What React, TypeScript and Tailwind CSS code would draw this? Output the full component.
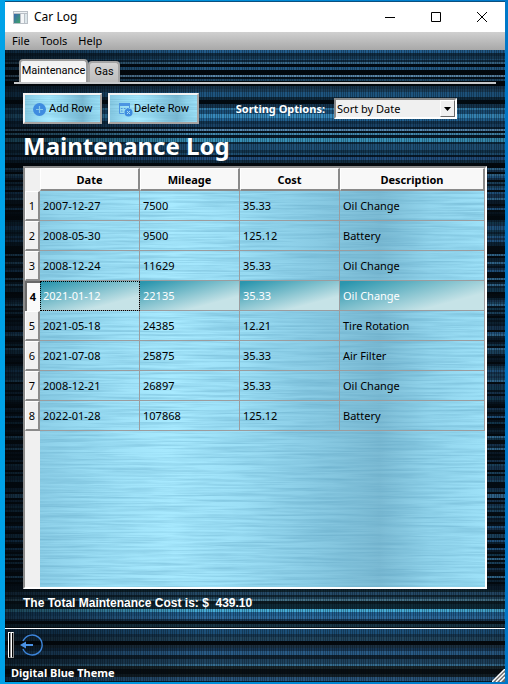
import { useId, useState } from "react";

type Entry = { date: string; mileage: string; cost: string; description: string };

const entries: Entry[] = [
  { date: "2007-12-27", mileage: "7500", cost: "35.33", description: "Oil Change" },
  { date: "2008-05-30", mileage: "9500", cost: "125.12", description: "Battery" },
  { date: "2008-12-24", mileage: "11629", cost: "35.33", description: "Oil Change" },
  { date: "2021-01-12", mileage: "22135", cost: "35.33", description: "Oil Change" },
  { date: "2021-05-18", mileage: "24385", cost: "12.21", description: "Tire Rotation" },
  { date: "2021-07-08", mileage: "25875", cost: "35.33", description: "Air Filter" },
  { date: "2008-12-21", mileage: "26897", cost: "35.33", description: "Oil Change" },
  { date: "2022-01-28", mileage: "107868", cost: "125.12", description: "Battery" },
];

// Horizontal light bands of the dark theme: top, height, colour
const bands: [number, number, string][] = [
  [0, 3, "#225c8b"], [3, 3, "#102c42"], [6, 3, "#163a55"], [9, 1, "#215074"], [10, 2, "#0f2a3f"],
  [12, 2, "#396889"], [14, 3, "#020a12"], [17, 3, "#265c86"], [20, 5, "#02070c"], [25, 2, "#5a86a8"],
  [27, 2, "#04101a"], [29, 2, "#214a68"], [31, 5, "#02070b"], [36, 3, "#16344c"], [39, 3, "#1a3e5a"],
  [42, 5, "#1e547e"], [47, 3, "#0f293c"], [50, 4, "#020a10"], [54, 4, "#14344d"], [58, 2, "#3078a4"],
  [60, 4, "#1b4f78"], [64, 4, "#3789bb"], [68, 3, "#20608f"], [71, 3, "#12344f"], [74, 3, "#1a4366"],
  [77, 2, "#0a1e2e"], [79, 2, "#5587ae"], [81, 2, "#04101a"], [83, 2, "#4489ae"], [85, 3, "#081826"],
  [88, 4, "#378fb5"], [92, 2, "#0d2a3e"], [94, 6, "#1f4f74"], [100, 3, "#12344c"], [103, 2, "#1f4f72"],
  [105, 2, "#081826"], [107, 3, "#224e7e"], [110, 3, "#102c40"], [113, 5, "#03090d"],
  [539, 3, "#0f252f"], [542, 3, "#254a67"], [545, 2, "#112632"], [547, 2, "#204359"], [549, 2, "#437086"],
  [551, 3, "#0c1b22"], [554, 5, "#0f2b38"], [559, 3, "#46abd4"], [562, 4, "#215f90"], [566, 3, "#2e6a9c"],
  [569, 2, "#183a58"], [571, 3, "#060d11"], [574, 3, "#1a3848"], [577, 2, "#0a161d"],
  [579, 5, "#1c4f78"], [584, 3, "#163650"], [587, 4, "#22465e"], [591, 4, "#05090c"], [595, 3, "#1c3040"],
  [598, 3, "#183856"], [601, 4, "#295a84"], [605, 4, "#0f212f"], [609, 5, "#1f425d"], [614, 2, "#356d90"],
  [616, 3, "#182428"], [619, 5, "#090e11"], [624, 3, "#131f26"], [627, 4, "#2a5479"], [631, 5, "#0c1a26"],
];

const sideColours = ["#081520", "#17344f", "#03090e", "#215480", "#0d2334", "#13384f", "#040d14", "#32698f", "#0b1b2a", "#1c4460", "#060c10"];

for (let y = 118, i = 3; y < 539; y += 2) {
  i = (i * 73 + 41) % 997;
  bands.push([y, 2, sideColours[i % sideColours.length]]);
}

function DigitalBackdrop() {
  const id = useId();
  return (
    <svg className="absolute inset-0 -z-10 h-full w-full bg-[#081420]" aria-hidden="true">
      <defs>
        <linearGradient id={id + "s"}>
          <stop offset="0" stopColor="#02060a" stopOpacity="0.65" />
          <stop offset="0.12" stopColor="#02060a" stopOpacity="0.45" />
          <stop offset="0.4" stopColor="#02060a" stopOpacity="0" />
          <stop offset="0.85" stopColor="#02060a" stopOpacity="0" />
          <stop offset="1" stopColor="#02060a" stopOpacity="0.1" />
        </linearGradient>
        <pattern id={id + "v"} width="9" height="4" patternUnits="userSpaceOnUse">
          <path d="M0 0h1v4H0zM3 0h1v4H3zM5 0h1v4H5zM7 0h1v4H7z" fill="#010a14" fillOpacity="0.32" />
        </pattern>
      </defs>
      {bands.map(([y, h, c]) => (
        <rect key={y} y={y} width="100%" height={h} fill={c} />
      ))}
      <rect width="100%" height="100%" fill={`url(#${id}v)`} />
      <rect width="100%" height="100%" fill={`url(#${id}s)`} />
    </svg>
  );
}

function BrushedMetal() {
  const id = useId();
  return (
    <svg className="absolute inset-0 -z-10 h-full w-full" aria-hidden="true">
      <defs>
        <linearGradient id={id + "g"}>
          <stop offset="0" stopColor="#8accE5" />
          <stop offset="0.15" stopColor="#9bdef5" />
          <stop offset="0.32" stopColor="#a8eaff" />
          <stop offset="0.47" stopColor="#9cdff6" />
          <stop offset="0.62" stopColor="#8accE5" />
          <stop offset="0.77" stopColor="#7cbbd4" />
          <stop offset="0.88" stopColor="#92d5ed" />
          <stop offset="1" stopColor="#9de1f8" />
        </linearGradient>
        <filter id={id + "n"} x="0" y="0" width="100%" height="100%" colorInterpolationFilters="sRGB">
          <feTurbulence type="fractalNoise" baseFrequency="0.012 0.45" numOctaves="4" seed="8" />
          <feColorMatrix values="0 0 0 0 0.35  0 0 0 0 0.62  0 0 0 0 0.74  0.8 0 0 0 -0.28" />
        </filter>
      </defs>
      <rect width="100%" height="100%" fill={`url(#${id}g)`} />
      <rect width="100%" height="100%" filter={`url(#${id}n)`} />
    </svg>
  );
}

const metalButton =
  "relative isolate flex h-[31px] items-center border-2 border-t-[#f4f4f4] border-l-[#f4f4f4] border-r-[#a8a4a2] border-b-[#a8a4a2] pt-[2px] font-['Roboto','Noto_Sans',sans-serif] text-[11px] text-black";

const bevel = "border-t border-l border-r-2 border-b-2 border-t-white border-l-white border-r-[#8a8a8a] border-b-[#8a8a8a]";

export default function App() {
  const [selected, setSelected] = useState(3);
  return (
    <div className="flex min-h-screen flex-col bg-linear-to-r from-[#00a2e8] to-[#0078c8] pt-px pr-[3px] pb-[2px] pl-[5px] font-['Noto_Sans','Open_Sans',sans-serif] text-black">
      <header className="flex h-[31px] items-center border-t border-[#0a5080] bg-white pl-2">
        <svg width="15" height="13" viewBox="0 0 15 13" aria-hidden="true">
          <defs>
            <linearGradient id="appIcon" x2="1" y2="1">
              <stop offset="0" stopColor="#3b68b0" />
              <stop offset="1" stopColor="#3fa36a" />
            </linearGradient>
          </defs>
          <path d="M0 0h15v13H0z" fill="#b9bfc6" />
          <path d="M1 1h13v1H1z" fill="#eef1f4" />
          <path d="M1 3h6v9H1z" fill="url(#appIcon)" />
          <path d="M8 3h3v9H8z" fill="#f4f6f8" />
          <path d="M12 3h2v9h-2z" fill="#dce6ea" />
        </svg>
        <h1 className="ml-[6px] flex-1 text-[12px]">Car Log</h1>
        <button type="button" aria-label="Minimize" className="flex h-full w-[46px] items-center justify-center">
          <svg width="10" height="10"><path d="M0 5h10v1H0z" /></svg>
        </button>
        <button type="button" aria-label="Maximize" className="flex h-full w-[46px] items-center justify-center">
          <svg width="10" height="10"><path d="M.5.5h9v9h-9z" fill="none" stroke="#000" /></svg>
        </button>
        <button type="button" aria-label="Close" className="flex h-full w-[46px] items-center justify-center">
          <svg width="10" height="10"><path d="M0 0l10 10M10 0L0 10" stroke="#000" /></svg>
        </button>
      </header>
      <nav className="flex h-[18px] items-center gap-[11px] bg-linear-to-b from-[#d0d0d0] to-[#a8a8a8] pl-[7px] text-[11px]">
        <button type="button">File</button>
        <button type="button">Tools</button>
        <button type="button">Help</button>
      </nav>

      <main className="relative isolate flex flex-1 flex-col">
        <DigitalBackdrop />
        <div className="flex flex-1 flex-col pt-[9px] pr-[9px] pb-4 pl-[9px]">
          <div role="tablist" className="flex items-end pl-[5px] font-['Roboto','Noto_Sans',sans-serif] text-[11px]">
            <button type="button" role="tab" aria-selected="true" className="h-[23px] w-[69px] rounded-t border-2 border-b-0 border-[#9a9a9a] bg-linear-to-b from-[#f0f0f0] to-white">
              Maintenance
            </button>
            <button type="button" role="tab" aria-selected="false" className="h-[21px] w-8 rounded-t border-2 border-b-0 border-[#a4a4a4] bg-linear-to-b from-[#d4d4d4] to-[#bcbcbc]">
              Gas
            </button>
          </div>
          <section className="flex flex-1 flex-col border-t-2 border-[#c6c8ca] px-[9px] pt-[9px]">
            <div className="flex items-center gap-[6px]">
              <button type="button" className={metalButton + " w-[79px] gap-[3px] pl-2"}>
                <BrushedMetal />
                <svg width="13" height="13" viewBox="0 0 13 13" aria-hidden="true">
                  <circle cx="6.5" cy="6.5" r="6.5" fill="#3f8ce0" />
                  <path d="M6.500 3v7M3 6.500h7" stroke="#86c8ea" strokeWidth="1.200" />
                </svg>
                Add Row
              </button>
              <button type="button" className={metalButton + " w-[91px] gap-px pl-2"}>
                <BrushedMetal />
                <svg width="15" height="15" viewBox="0 0 15 15" fill="none" aria-hidden="true">
                  <path d="M6 11.500H1.500V1.500h10V6" stroke="#4c94e2" />
                  <path d="M1 1h11v3H1z" fill="#4c94e2" />
                  <path d="M3 6h1.500v1H3zM6 6h1.500v1H6zM9 6h1.500v1H9zM3 8.500h1.500v1H3z" fill="#4c94e2" />
                  <circle cx="10.500" cy="10.500" r="4" fill="#3f8ce0" />
                  <path d="M9 9l3 3M12 9l-3 3" stroke="#a9dcf4" />
                </svg>
                Delete Row
              </button>
              <label htmlFor="sort" className="ml-auto pt-[2px] text-[11px] font-bold text-white">
                Sorting Options:
              </label>
              <div className="relative mr-[30px] ml-[3px] h-[21px] w-[123px]">
                <select id="sort" className="block h-full w-full appearance-none border-2 border-t-[#8a8a8a] border-l-[#8a8a8a] border-r-white border-b-white bg-[#f0f0f0] pl-px text-[11px] leading-4">
                  <option>Sort by Date</option>
                  <option>Sort by Mileage</option>
                  <option>Sort by Cost</option>
                </select>
                <span className="pointer-events-none absolute inset-y-[2px] right-[2px] flex w-[15px] items-center justify-center border border-t-white border-l-white border-r-[#696969] border-b-[#696969] bg-[#f0f0f0]">
                  <svg width="7" height="4"><path d="M0 0h7L3.500 4z" /></svg>
                </span>
              </div>
            </div>
            <h2 className="mt-[6px] mb-1 text-[24px] leading-8 font-bold text-white">
              Maintenance Log
            </h2>
            <div className="relative isolate flex-1 border-2 border-t-[#8a8a8a] border-l-[#8a8a8a] border-r-white border-b-white">
              <BrushedMetal />
              <div className="absolute inset-y-0 left-0 -z-10 w-[15px] bg-[#f0f0f0]" />
              <table className="w-full table-fixed border-separate border-spacing-0 text-left text-[11px]">
                <colgroup>
                  <col className="w-[15px]" />
                  <col className="w-[100px]" />
                  <col className="w-[100px]" />
                  <col className="w-[100px]" />
                  <col />
                </colgroup>
                <thead>
                  <tr className="h-[23px] text-center">
                    <td />
                    {["Date", "Mileage", "Cost", "Description"].map((name) => (
                      <th key={name} scope="col" className={bevel + " bg-[#f8f8f8] p-0 pt-[2px] font-bold"}>
                        {name}
                      </th>
                    ))}
                  </tr>
                </thead>
                <tbody>
                  {entries.map((entry, i) => {
                    const active = i === selected;
                    return (
                      <tr key={i} className="h-[30px]" onClick={() => setSelected(i)}>
                        <th
                          scope="row"
                          className={
                            "p-0 text-center " +
                            (active
                              ? "border-t-2 border-l-2 border-[#696969] bg-[#fafafa] pr-px font-bold"
                              : bevel + " bg-[#f0f0f0] pt-[2px] font-normal")
                          }
                        >
                          {i + 1}
                        </th>
                        {[entry.date, entry.mileage, entry.cost, entry.description].map((value, c) => (
                          <td
                            key={c}
                            className={
                              "border-r border-b border-[#9c9c9e] p-0 pt-[2px] pl-[3px] " +
                              (active ? "bg-linear-[165deg] from-[#2b96ae] from-5% to-[#c6e3e7] to-75% text-white " : "") +
                              (active && c === 0 ? "outline-1 -outline-offset-1 outline-black outline-dotted" : "")
                            }
                          >
                            {value}
                          </td>
                        ))}
                      </tr>
                    );
                  })}
                </tbody>
              </table>
            </div>
            <p className="mt-[6px] font-['Liberation_Sans',sans-serif] text-[12px] leading-[17px] font-bold whitespace-pre text-white">
              The Total Maintenance Cost is: $  439.10
            </p>
          </section>
        </div>
        <div className="flex h-8 items-center border-t border-white pl-[3px]">
          <div className="flex h-[26px] w-[6px]">
            <div className="flex-1 border border-t-white border-r-[#8c8c8c] border-b-[#8c8c8c] border-l-white bg-black" />
            <div className="flex-1 border border-t-white border-r-[#8c8c8c] border-b-[#8c8c8c] border-l-white bg-black" />
          </div>
          <button type="button" aria-label="Exit" className="ml-[6px]">
            <svg width="24" height="24" viewBox="0 0 24 24" fill="none" aria-hidden="true">
              <path d="M3 8a10 10 0 1 1 0 8" stroke="#3d86dc" strokeWidth="1.400" />
              <path d="M4 12h9" stroke="#4a92e6" strokeWidth="2" />
              <path d="M0 12l6-3.500v7z" fill="#4a92e6" />
            </svg>
          </button>
        </div>
        <footer className="flex h-[22px] items-end justify-between pl-[6px]">
          <span className="text-[11px] leading-[18px] font-bold text-white">Digital Blue Theme</span>
          <svg width="13" height="13" aria-hidden="true">
            <path d="M0 13L13 0V13z" fill="#6a6a6a" />
            <path d="M0 13L13 0M4 13l9-9M8 13l5-5" stroke="#fff" strokeWidth="1.500" />
          </svg>
        </footer>
      </main>
    </div>
  );
}
